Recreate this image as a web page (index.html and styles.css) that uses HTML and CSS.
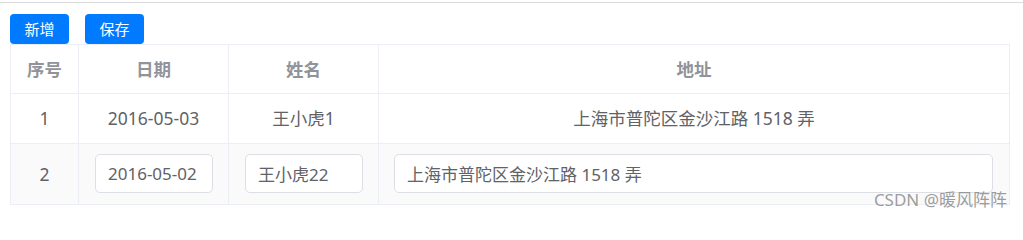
FILE: index.html
```html
<!DOCTYPE html>
<html lang="zh-CN">
<head>
<meta charset="utf-8">
<title>表格</title>
<link rel="stylesheet" href="styles.css">
</head>
<body>
<div class="topline"></div>
<div class="toolbar">
  <button class="btn">新增</button>
  <button class="btn">保存</button>
</div>
<table class="grid">
  <colgroup>
    <col class="c-idx">
    <col class="c-date">
    <col class="c-name">
    <col class="c-addr">
  </colgroup>
  <thead>
    <tr><th>序号</th><th>日期</th><th>姓名</th><th>地址</th></tr>
  </thead>
  <tbody>
    <tr class="row">
      <td>1</td><td>2016-05-03</td><td>王小虎1</td><td>上海市普陀区金沙江路 1518 弄</td>
    </tr>
    <tr class="row row-edit">
      <td>2</td>
      <td class="cell-input"><input class="inp" value="2016-05-02"></td>
      <td class="cell-input"><input class="inp" value="王小虎22"></td>
      <td class="cell-input cell-wide"><input class="inp" value="上海市普陀区金沙江路 1518 弄"></td>
    </tr>
  </tbody>
</table>
<div class="watermark">CSDN @暖风阵阵</div>
</body>
</html>
```
FILE: styles.css
```css
* { box-sizing: border-box; }
html, body { margin: 0; padding: 0; background: #fff; }
body {
  position: relative;
  width: 1023px;
  height: 217px;
  overflow: hidden;
  font-family: "Noto Sans", "Noto Sans CJK SC", sans-serif;
  color: #606266;
}
.topline {
  margin-top: 2px;
  height: 1px;
  background: #dcdcdc;
}
.toolbar {
  display: flex;
  gap: 16px;
  padding: 11px 0 0 10px;
  height: 41px;
}
.btn {
  width: 59px;
  height: 30px;
  border: none;
  border-radius: 4px;
  background: #007bff;
  color: #fff;
  font-family: inherit;
  font-size: 15px;
  line-height: 30px;
  padding: 0;
}
.grid {
  margin-left: 10px;
  width: 1000px;
  table-layout: fixed;
  border-collapse: separate;
  border-spacing: 0;
  border-top: 1px solid #ebeef5;
  border-left: 1px solid #ebeef5;
  font-size: 17.5px;
}
.c-idx { width: 68px; }
.c-date { width: 150px; }
.c-name { width: 150px; }
.grid th, .grid td {
  border-right: 1px solid #ebeef5;
  border-bottom: 1px solid #ebeef5;
  text-align: center;
  padding: 12px 0;
}
.grid th {
  color: #909399;
  font-weight: bold;
  line-height: 24px;
}
.grid td { line-height: 25px; }
.row-edit td { background: #fafafa; }
.grid .cell-input {
  padding: 10px 15px 11px 16px;
  text-align: left;
}
.grid .cell-wide { padding-left: 15px; padding-right: 16px; }
.inp {
  display: block;
  width: 100%;
  height: 39px;
  border: 1px solid #dcdfe6;
  border-radius: 5px;
  background: #fff;
  color: #606266;
  font-family: inherit;
  font-size: 17px;
  padding: 0 12px;
  outline: none;
}
.watermark {
  position: absolute;
  right: 16px;
  top: 186px;
  font-size: 17px;
  color: rgba(140, 140, 140, 0.85);
  white-space: nowrap;
}
```
